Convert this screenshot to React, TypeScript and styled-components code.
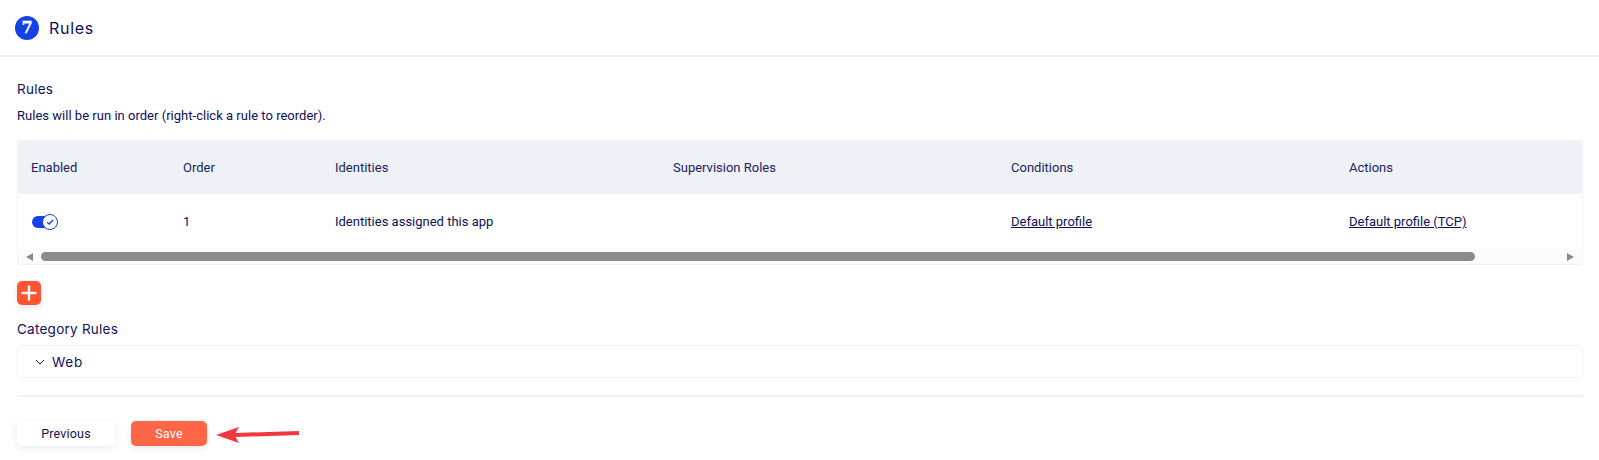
import React from "react";
import styled, { createGlobalStyle } from "styled-components";

const Global = createGlobalStyle`
    html, body {
        margin: 0;
        padding: 0;
        background: #fff;
        color: #0f1059;
        font-family: Roboto, "Liberation Sans", sans-serif;
    }
`;

const Page = styled.div`
    width: 1599px;
    height: 460px;
    overflow: hidden;
`;

const StepHeader = styled.header`
    display: flex;
    align-items: center;
    gap: 10px;
    height: 57px;
    box-sizing: border-box;
    padding: 0 0 0 15px;
    border-bottom: 2px solid #eef1f6;
`;

const StepBadge = styled.span`
    display: flex;
    align-items: center;
    justify-content: center;
    width: 24px;
    height: 24px;
    border-radius: 50%;
    background: #1741e8;
    color: #fff;
    font-family: "DejaVu Serif", serif;
    font-size: 16px;
    font-weight: 700;
    -webkit-text-stroke: 0.3px #fff;
`;

const StepTitle = styled.h2`
    margin: 0;
    font-family: Inter, sans-serif;
    font-size: 16px;
    font-weight: 400;
    letter-spacing: 0.7px;
`;

const Body = styled.main`
    padding: 24px 16px 0 17px;
`;

const Label = styled.div`
    font-family: Inter, sans-serif;
    font-size: 13.5px;
    line-height: 16px;
    letter-spacing: 0.25px;
`;

const Description = styled.p`
    margin: 10px 0 0;
    font-size: 13px;
    line-height: 18px;
    letter-spacing: 0.02px;
`;

const TableWrap = styled.div`
    margin-top: 15px;
    border: 1px solid #f0f2f7;
    border-top: 0;
    border-radius: 4px;
    overflow: hidden;
`;

const Row = styled.div<{ $head?: boolean }>`
    display: grid;
    grid-template-columns: 152px 152px 338px 338px 338px 1fr;
    align-items: center;
    height: ${(p) => (p.$head ? "54px" : "55px")};
    background: ${(p) => (p.$head ? "#eef1f6" : "#fff")};
    color: ${(p) => (p.$head ? "#22245f" : "#0f1059")};
    font-size: 13px;
`;

const Cell = styled.div`
    padding-left: 13px;
`;

const TableLink = styled.a`
    color: #0f1059;
    text-decoration: underline;
`;

const Toggle = styled.span`
    position: relative;
    display: block;
    width: 20px;
    height: 12px;
    margin-left: 1px;
    border-radius: 6px;
    background: #1741e8;
`;

const ToggleKnob = styled.span`
    position: absolute;
    top: -2px;
    left: 10px;
    display: flex;
    align-items: center;
    justify-content: center;
    width: 16px;
    height: 16px;
    box-sizing: border-box;
    border: 1px solid #1741e8;
    border-radius: 50%;
    background: #fff;
`;

const Scrollbar = styled.div`
    display: flex;
    align-items: center;
    height: 15px;
    background: #fbfbfd;
    padding: 0 8px;
`;

const ScrollTrack = styled.div`
    flex: 1;
    display: flex;
    padding: 0 92px 0 8px;
`;

const ScrollThumb = styled.div`
    flex: 1;
    height: 9px;
    border-radius: 5px;
    background: #8b8b8b;
`;

const ScrollArrow = styled.span<{ $right?: boolean }>`
    width: 0;
    height: 0;
    border-top: 4.5px solid transparent;
    border-bottom: 4.5px solid transparent;
    ${(p) =>
        p.$right
            ? "border-left: 7px solid #8b8b8b;"
            : "border-right: 7px solid #8b8b8b;"}
`;

const AddButton = styled.button`
    display: flex;
    align-items: center;
    justify-content: center;
    width: 24px;
    height: 24px;
    margin-top: 16px;
    padding: 0;
    border: 0;
    border-radius: 5px;
    background: #ff5530;
    box-shadow: 0 2px 6px rgba(15, 16, 89, 0.1);
`;

const CategoryLabel = styled(Label)`
    margin-top: 16px;
`;

const Accordion = styled.div`
    display: flex;
    align-items: center;
    gap: 7px;
    height: 33px;
    box-sizing: border-box;
    margin-top: 8px;
    padding-left: 17px;
    border: 1px solid #eef1f6;
    border-radius: 4px;
    font-family: Inter, sans-serif;
    font-size: 13.5px;
    letter-spacing: 0.7px;
`;

const Divider = styled.hr`
    height: 2px;
    margin: 17px 0 0;
    border: 0;
    background: #eef1f6;
`;

const Actions = styled.div`
    display: flex;
    align-items: center;
    gap: 16px;
    margin-top: 24px;
`;

const Button = styled.button<{ $primary?: boolean }>`
    width: ${(p) => (p.$primary ? "76px" : "98px")};
    height: 25px;
    padding: 0;
    border: 0;
    border-radius: 5px;
    background: ${(p) => (p.$primary ? "#ff6647" : "#fff")};
    color: ${(p) => (p.$primary ? "#fff" : "#0f1059")};
    font-family: Roboto, sans-serif;
    font-size: 12.5px;
    letter-spacing: 0.2px;
    box-shadow: 0 2px 8px rgba(15, 16, 89, 0.09);
`;

const Arrow = styled.svg`
    margin-left: -8px;
`;

export default function App() {
    return (
        <Page>
            <Global />
            <StepHeader>
                <StepBadge>7</StepBadge>
                <StepTitle>Rules</StepTitle>
            </StepHeader>
            <Body>
                <Label>Rules</Label>
                <Description>Rules will be run in order (right-click a rule to reorder).</Description>
                <TableWrap>
                    <Row $head>
                        <Cell>Enabled</Cell>
                        <Cell>Order</Cell>
                        <Cell>Identities</Cell>
                        <Cell>Supervision Roles</Cell>
                        <Cell>Conditions</Cell>
                        <Cell>Actions</Cell>
                    </Row>
                    <Row>
                        <Cell>
                            <Toggle>
                                <ToggleKnob>
                                    <svg width="10" height="10" viewBox="0 0 10 10" fill="none">
                                        <path d="M2 5.2 L4.2 7 L8 3" stroke="#1741e8" strokeWidth="1.3" />
                                    </svg>
                                </ToggleKnob>
                            </Toggle>
                        </Cell>
                        <Cell>1</Cell>
                        <Cell>Identities assigned this app</Cell>
                        <Cell />
                        <Cell><TableLink href="#">Default profile</TableLink></Cell>
                        <Cell><TableLink href="#">Default profile (TCP)</TableLink></Cell>
                    </Row>
                    <Scrollbar>
                        <ScrollArrow />
                        <ScrollTrack><ScrollThumb /></ScrollTrack>
                        <ScrollArrow $right />
                    </Scrollbar>
                </TableWrap>
                <AddButton aria-label="Add rule">
                    <svg width="16" height="16" viewBox="0 0 16 16">
                        <path d="M8 1.5 V14.5 M1.5 8 H14.5" stroke="#fff" strokeWidth="2.4" strokeLinecap="round" />
                    </svg>
                </AddButton>
                <CategoryLabel>Category Rules</CategoryLabel>
                <Accordion>
                    <svg width="10" height="10" viewBox="0 0 10 10" fill="none">
                        <path d="M1 3 L5 7 L9 3" stroke="#0f1059" strokeWidth="1" />
                    </svg>
                    Web
                </Accordion>
                <Divider />
                <Actions>
                    <Button>Previous</Button>
                    <Button $primary>Save</Button>
                    <Arrow width="85" height="20" viewBox="0 0 85 20">
                        <path d="M1 11 L24 3 L20.5 9 L84 7 L84 11 L20.5 13 L24 19 Z" fill="#f0383d" />
                    </Arrow>
                </Actions>
            </Body>
        </Page>
    );
}
